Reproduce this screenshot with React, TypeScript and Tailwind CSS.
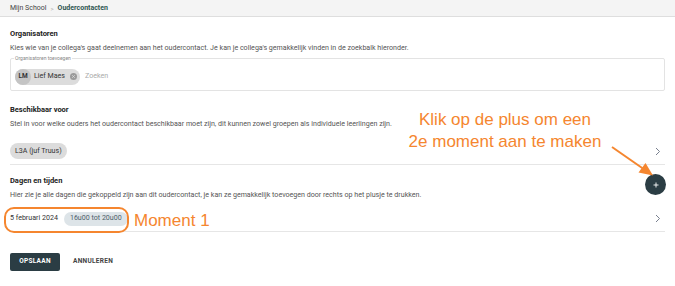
import React from "react";

const font = { fontFamily: "Roboto, 'Noto Sans', sans-serif" };
const annot = { fontFamily: "'Liberation Sans', Arial, sans-serif" };

const Chevron = () => (
  <svg width="6" height="9" viewBox="0 0 6 9" className="text-gray-500">
    <path d="M1 1l3.5 3.5L1 8" fill="none" stroke="currentColor" strokeWidth="0.9" />
  </svg>
);

export default function App() {
  return (
    <div className="relative w-[675px] h-[286px] bg-white overflow-hidden text-[#222]" style={font}>
      {/* breadcrumb */}
      <div className="h-[17px] bg-[#f4f4f4] border-b border-[#dedede] flex items-center px-[10px] text-[7px] gap-[4px]">
        <span className="text-[#444]">Mijn School</span>
        <span className="text-[#aaa] text-[6px]">&gt;</span>
        <span className="font-bold text-[#2f5652]">Oudercontacten</span>
      </div>

      <div className="px-[10px]">
        {/* Organisatoren */}
        <div className="pt-[12px]">
          <h2 className="text-[7.5px] font-bold leading-[9px]">Organisatoren</h2>
          <p className="text-[7.1px] text-[#555] leading-[9px] mt-[5px]">
            Kies wie van je collega's gaat deelnemen aan het oudercontact. Je kan je collega's gemakkelijk vinden in de zoekbalk hieronder.
          </p>
          <div className="relative mt-[6px] h-[33px] border border-[#e3e3e3] rounded-[2px] flex items-center px-[4px] pt-[4px]">
            <span className="absolute -top-[4px] left-[3px] bg-white px-[1px] text-[5px] text-[#888] leading-[7px]">
              Organisatoren toevoegen
            </span>
            <div className="flex items-center h-[16px] bg-[#dcdcdc] rounded-full pr-[3px]">
              <div className="w-[16px] h-[16px] rounded-full bg-[#c4c4c4] flex items-center justify-center text-[6.5px] font-bold text-[#333]">
                LM
              </div>
              <span className="text-[7.1px] text-[#333] ml-[3px]">Lief Maes</span>
              <svg width="7" height="7" viewBox="0 0 10 10" className="ml-[5px]">
                <circle cx="5" cy="5" r="5" fill="#9a9a9a" />
                <path d="M3.2 3.2l3.6 3.6M6.8 3.2l-3.6 3.6" stroke="#dcdcdc" strokeWidth="1.2" />
              </svg>
            </div>
            <span className="text-[7.1px] text-[#aaa] ml-[5px]">Zoeken</span>
          </div>
        </div>

        {/* Beschikbaar voor */}
        <div className="pt-[14px] border-b border-[#e6e6e6] pb-[5px]">
          <h2 className="text-[7.5px] font-bold leading-[9px]">Beschikbaar voor</h2>
          <p className="text-[7.1px] text-[#555] leading-[9px] mt-[5px]">
            Stel in voor welke ouders het oudercontact beschikbaar moet zijn, dit kunnen zowel groepen als individuele leerlingen zijn.
          </p>
          <div className="flex items-center justify-between mt-[15px] pr-[4px]">
            <span className="h-[16px] px-[5px] bg-[#dcdcdc] rounded-full text-[7.1px] text-[#333] flex items-center">
              L3A (juf Truus)
            </span>
            <Chevron />
          </div>
        </div>

        {/* Dagen en tijden */}
        <div className="pt-[11px] border-b border-[#e6e6e6]">
          <h2 className="text-[7.5px] font-bold leading-[9px]">Dagen en tijden</h2>
          <p className="text-[7.1px] text-[#555] leading-[9px] mt-[5px]">
            Hier zie je alle dagen die gekoppeld zijn aan dit oudercontact, je kan ze gemakkelijk toevoegen door rechts op het plusje te drukken.
          </p>
          <div className="flex items-center justify-between h-[25px] mt-[7px] pr-[4px]">
            <div className="flex items-center gap-[6px]">
              <span className="text-[7.1px] text-[#333]">5 februari 2024</span>
              <span className="h-[14px] px-[6px] bg-[#dde4e8] rounded-full text-[7.1px] text-[#4d5f6b] flex items-center">
                16u00 tot 20u00
              </span>
            </div>
            <Chevron />
          </div>
        </div>

        {/* buttons */}
        <div className="flex items-center gap-[13px] mt-[21px]">
          <button className="h-[18px] w-[50px] bg-[#2b3d44] text-white rounded-[2px] text-[6.5px] font-bold tracking-[0.3px]">
            OPSLAAN
          </button>
          <button className="text-[6.5px] font-bold text-[#444] tracking-[0.3px]">ANNULEREN</button>
        </div>
      </div>

      {/* plus button */}
      <button className="absolute left-[645px] top-[174px] w-[21px] h-[21px] rounded-full bg-[#2b3d44] flex items-center justify-center">
        <svg width="6" height="6" viewBox="0 0 6 6">
          <path d="M3 0.5v5M0.5 3h5" stroke="#fff" strokeWidth="0.9" />
        </svg>
      </button>

      {/* annotations */}
      <div className="absolute left-[4px] top-[207px] w-[125px] h-[26px] border-2 border-[#f5862f] rounded-[10px]" />
      <div className="absolute left-[134px] top-[211px] text-[17px] leading-[20px] text-[#f5862f]" style={annot}>
        Moment 1
      </div>
      <div
        className="absolute left-[395px] top-[109px] w-[220px] text-center text-[17px] leading-[22px] text-[#f5862f]"
        style={annot}
      >
        Klik op de plus om een
        <br />
        2e moment aan te maken
      </div>
      <svg className="absolute left-0 top-0" width="675" height="286">
        <line x1="612" y1="147" x2="645" y2="170" stroke="#f5862f" strokeWidth="2" />
        <path d="M653 175.5L638.5 172.5L645.5 163Z" fill="#f5862f" />
      </svg>
    </div>
  );
}
